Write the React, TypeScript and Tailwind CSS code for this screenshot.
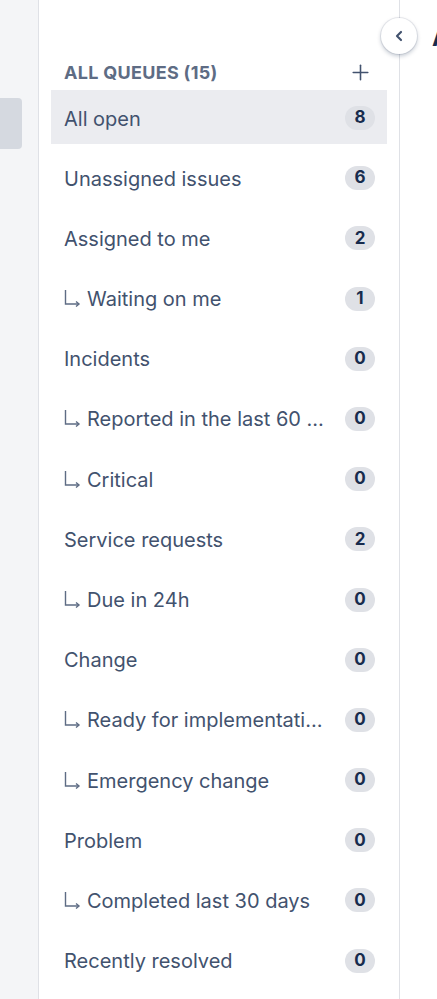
import { Plus, ChevronLeft } from 'lucide-react';

interface Queue {
  name: string;
  count: number;
  sub?: boolean;
}

const queues: Queue[] = [
  { name: 'All open', count: 8 },
  { name: 'Unassigned issues', count: 6 },
  { name: 'Assigned to me', count: 2 },
  { name: 'Waiting on me', count: 1, sub: true },
  { name: 'Incidents', count: 0 },
  { name: 'Reported in the last 60 minutes', count: 0, sub: true },
  { name: 'Critical', count: 0, sub: true },
  { name: 'Service requests', count: 2 },
  { name: 'Due in 24h', count: 0, sub: true },
  { name: 'Change', count: 0 },
  { name: 'Ready for implementation', count: 0, sub: true },
  { name: 'Emergency change', count: 0, sub: true },
  { name: 'Problem', count: 0 },
  { name: 'Completed last 30 days', count: 0, sub: true },
  { name: 'Recently resolved', count: 0 },
];

function SubArrow() {
  return (
    <svg width="18" height="18" viewBox="0 0 18 18" className="mr-[5px] shrink-0 -translate-y-[1px]">
      <path d="M1.5 1v14h13" fill="none" stroke="#5e6c84" strokeWidth="1.4" />
      <path d="M12 12.5l3 2.5-3 2.5" fill="none" stroke="#5e6c84" strokeWidth="1.4" />
    </svg>
  );
}

export default function App() {
  return (
    <div className="flex h-[999px] w-[437px] overflow-hidden bg-white font-['Inter',sans-serif]">
      {/* Left nav strip */}
      <div className="w-[39px] shrink-0 border-r border-[#dfe1e6] bg-[#f4f5f7]">
        <div className="mt-[98px] h-[51px] w-[22px] rounded-r-[4px] bg-[#d5d9e0]" />
      </div>

      {/* Queues panel */}
      <div className="w-[361px] shrink-0 border-r border-[#dfe1e6] px-[12px] pt-[54px]">
        <div className="flex h-[36px] items-center justify-between pl-[13px] pr-[14px]">
          <span className="text-[18px] font-bold tracking-[0.3px] text-[#5e6c84]">ALL QUEUES (15)</span>
          <Plus size={25} strokeWidth={1.5} className="text-[#42526e]" />
        </div>
        <div className="flex flex-col gap-[6.2px]">
          {queues.map((q, i) => (
            <div
              key={q.name}
              className={`flex h-[54px] items-center justify-between pl-[13px] pr-[12px] ${
                i === 0 ? 'bg-[#ebecf0]' : ''
              }`}
            >
              <div className="flex min-w-0 flex-1 items-center pt-[3px]">
                {q.sub && <SubArrow />}
                <span className="truncate text-[20px] text-[#42526e]">{q.name}</span>
              </div>
              <span className="ml-[18px] mt-[2px] flex h-[24px] min-w-[30px] shrink-0 items-center justify-center rounded-full bg-[#dfe1e6] px-2 text-[17px] font-bold text-[#172b4d]">
                {q.count}
              </span>
            </div>
          ))}
        </div>
      </div>

      {/* Main content (mostly off-screen) */}
      <div className="relative flex-1">
        <div className="whitespace-nowrap pl-[32px] pt-[20px] text-[24px] font-bold text-[#172b4d]">All open</div>
        <button className="absolute left-[-19px] top-[18px] flex h-[36px] w-[36px] items-center justify-center rounded-full bg-white shadow-[0_0_0_1px_rgba(9,30,66,0.08),0_2px_4px_rgba(9,30,66,0.25)]">
          <ChevronLeft size={16} strokeWidth={3.2} className="text-[#42526e]" />
        </button>
      </div>
    </div>
  );
}
